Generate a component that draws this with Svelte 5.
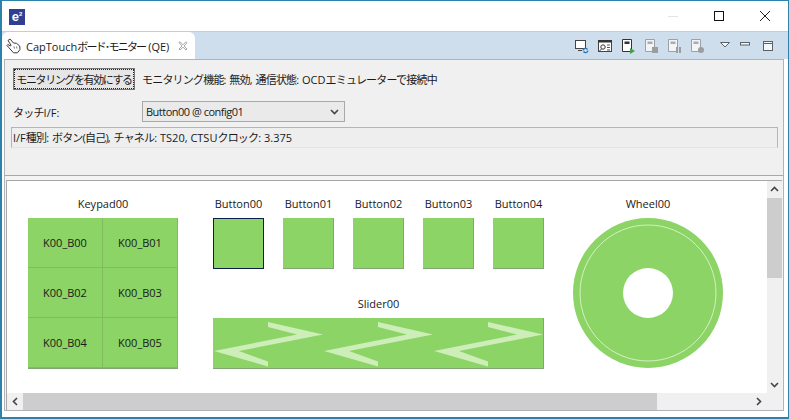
<script lang="ts">
	const keys = ['K00_B00', 'K00_B01', 'K00_B02', 'K00_B03', 'K00_B04', 'K00_B05'];
	const buttons = ['Button00', 'Button01', 'Button02', 'Button03', 'Button04'];
	// chevron offsets inside the slider
	const chevrons = [0, 110, 220];
</script>

<div class="window">
	<header class="titlebar">
		<div class="app-logo">e<sup>2</sup></div>
		<div class="win-controls">
			<svg width="12" height="12" viewBox="0 0 12 12"><path d="M1 6.5h10" stroke="#e4e4e4" fill="none" /></svg>
			<svg width="12" height="12" viewBox="0 0 12 12"><rect x="1.5" y="1.5" width="9" height="9" stroke="#111" fill="none" /></svg>
			<svg width="12" height="12" viewBox="0 0 12 12"><path d="M1 1l10 10M11 1L1 11" stroke="#222" fill="none" /></svg>
		</div>
	</header>

	<div class="tabstrip">
		<div class="tab">
			<svg class="hand" width="16" height="16" viewBox="0 0 16 16">
				<path d="M2 2.500l2-1.500 3.500 4 3 .3 3.200 2.700.3 3.500-2.500 3.300H7.500L3 9.800 1 7.500l.8-1 2.700 1.500 .5-.8z" fill="#fff" stroke="#3a3a3a" stroke-linejoin="round" />
				<path d="M8 8.500l.5 2M10.500 8.500l.5 2" stroke="#777" fill="none" />
			</svg>
			<span class="tab-title">CapTouch<span class="ja tab-ja">ボード･モニター</span> (QE)</span>
			<svg class="close" width="10" height="10" viewBox="0 0 10 10">
				<path d="M1 1.500L2 .8 5 3.800 8 .8l1 1L6 5l3 3-1 1L5 6.200 2 9 1 8l3-3z" fill="#fff" stroke="#8a8f95" stroke-width=".8" />
			</svg>
		</div>
		<div class="toolbar">
			<svg width="16" height="16" viewBox="0 0 16 16">
				<rect x="1.500" y="2.500" width="10" height="8" fill="#fff" stroke="#444" /><path d="M4 12.500h4" stroke="#444" />
				<path d="M9 12.500a2.500 2.500 0 0 1 4.500-1M14 12.500a2.500 2.500 0 0 1-4.500 1" stroke="#2c78b8" stroke-width="1.300" fill="none" />
			</svg>
			<svg width="16" height="16" viewBox="0 0 16 16">
				<rect x="1.500" y="2.500" width="13" height="11" fill="#fff" stroke="#444" /><rect x="1" y="2" width="14" height="2.500" fill="#333" />
				<circle cx="6" cy="9" r="2.200" fill="none" stroke="#333" /><path d="M4.500 11L2.500 13" stroke="#333" /><path d="M10 7h3M10 9.500h3M10 12h3" stroke="#555" />
			</svg>
			<svg width="16" height="16" viewBox="0 0 16 16">
				<path d="M2.500 1.500h9v12h-9z" fill="#fff" stroke="#333" /><rect x="4.500" y="3.500" width="5" height="2.500" fill="#333" /><path d="M10 10l5 3-5 3z" fill="#43a047" />
			</svg>
			<svg width="16" height="16" viewBox="0 0 16 16">
				<path d="M2.500 1.500h9v12h-9z" fill="#f2f4f6" stroke="#9aa0a6" /><rect x="4.500" y="3.500" width="5" height="2.500" fill="#a8adb2" /><rect x="9" y="9" width="6" height="6" fill="#9b9ea1" />
			</svg>
			<svg width="16" height="16" viewBox="0 0 16 16">
				<path d="M2.500 1.500h9v12h-9z" fill="#f2f4f6" stroke="#9aa0a6" /><rect x="4.500" y="3.500" width="5" height="2.500" fill="#a8adb2" /><path d="M10 9v6h2V9zM13 9v6h2V9z" fill="#9b9ea1" />
			</svg>
			<svg width="16" height="16" viewBox="0 0 16 16">
				<path d="M2.500 1.500h9v12h-9z" fill="#f2f4f6" stroke="#9aa0a6" /><rect x="4.500" y="3.500" width="5" height="2.500" fill="#a8adb2" /><circle cx="12" cy="12" r="3" fill="#9b9ea1" />
			</svg>
			<svg class="menu" width="16" height="16" viewBox="0 0 16 16"><path d="M2.500 4.500h9L7 9z" fill="#f4f7fa" stroke="#5b6168" /></svg>
			<svg class="mini" width="16" height="16" viewBox="0 0 16 16"><rect x="2.500" y="4.500" width="9" height="2.500" fill="#f4f7fa" stroke="#5b6168" /></svg>
			<svg class="maxi" width="16" height="16" viewBox="0 0 16 16"><rect x="3.500" y="3.500" width="9" height="9" fill="#f4f7fa" stroke="#5b6168" /><path d="M3.500 5.500h9" stroke="#5b6168" /></svg>
		</div>
	</div>

	<div class="body">
		<section class="controls">
			<div class="monitor-row">
				<button type="button" class="monitor-btn"><span class="ja btn-ja">モニタリングを有効にする</span></button>
				<span><span class="ja">モニタリング機能</span>: <span class="ja">無効</span>, <span class="ja">通信状態</span>: OCD<span class="ja">エミュレーターで接続中</span></span>
			</div>
			<div class="touch-row">
				<span class="touch-label"><span class="ja">タッチ</span>I/F:</span>
				<div class="select">
					<span class="select-value">Button00 @ config01</span>
					<svg width="9" height="6" viewBox="0 0 9 6"><path d="M1 1l3.500 3.500L8 1" fill="none" stroke="#444" stroke-width="1.600" /></svg>
				</div>
			</div>
			<div class="info">I/F<span class="ja">種別</span>: <span class="ja">ボタン(自己)</span>, <span class="ja">チャネル</span>: TS20, CTSU<span class="ja">クロック</span>: 3.375</div>
		</section>

		<section class="viewer">
			<div class="canvas-row">
				<div class="canvas">
					<div class="keypad-col">
						<div class="cap">Keypad00</div>
						<div class="keypad">
							{#each keys as key}
								<div class="key">{key}</div>
							{/each}
						</div>
					</div>
					<div class="middle-col">
						<div class="button-row">
							{#each buttons as name, i}
								<div class="btn-col">
									<div class="cap">{name}</div>
									<div class="pad" class:selected={i === 0}></div>
								</div>
							{/each}
						</div>
						<div class="cap slider-cap">Slider00</div>
						<svg class="slider" width="331" height="51" viewBox="0 0 331 51">
							<rect width="331" height="51" fill="#8bd465" />
							<path d="M0 50.500H330.500V0" fill="none" stroke="#7fa673" />
							{#each chevrons as x}
								<path
									transform="translate({x} 0)"
									d="M55 4L110 16.500 26 33 55 43.500V48.500L1 33 84 16.500 55 9z"
									fill="#cdeeb8"
								/>
							{/each}
						</svg>
					</div>
					<div class="wheel-col">
						<div class="cap">Wheel00</div>
						<svg class="wheel" width="150" height="150" viewBox="0 0 150 150">
							<circle cx="75" cy="75" r="75" fill="#8bd465" />
							<circle cx="75" cy="75" r="68" fill="none" stroke="#d4f2c0" />
							<circle cx="75" cy="75" r="25" fill="#fff" />
						</svg>
					</div>
				</div>
				<div class="vscroll">
					<svg class="arrow" width="15" height="17" viewBox="0 0 15 17"><path d="M4 10l3.500-3.500L11 10" fill="none" stroke="#444" stroke-width="1.600" /></svg>
					<div class="vthumb"></div>
					<div class="spacer"></div>
					<svg class="arrow" width="15" height="17" viewBox="0 0 15 17"><path d="M4 7l3.500 3.500L11 7" fill="none" stroke="#444" stroke-width="1.600" /></svg>
				</div>
			</div>
			<div class="hscroll">
				<svg class="arrow" width="16" height="17" viewBox="0 0 16 17"><path d="M10 5L6.500 8.500 10 12" fill="none" stroke="#444" stroke-width="1.600" /></svg>
				<div class="hthumb"></div>
				<div class="spacer"></div>
				<svg class="arrow" width="17" height="17" viewBox="0 0 17 17"><path d="M7 5l3.500 3.500L7 12" fill="none" stroke="#444" stroke-width="1.600" /></svg>
				<div class="corner"></div>
			</div>
		</section>
	</div>
</div>

<style>
	:global(body) {
		margin: 0;
		background: #fff;
	}

	.window {
		width: 789px;
		height: 419px;
		box-sizing: border-box;
		display: flex;
		flex-direction: column;
		overflow: hidden;
		border: 1px solid #2b82ab;
		border-left-width: 2px;
		border-bottom-width: 2px;
		background: #fff;
		font-family: "Open Sans", "Noto Sans CJK JP", sans-serif;
		font-size: 11px;
		color: #1a1a1a;
	}

	.ja {
		letter-spacing: -0.8px;
	}

	.tab-ja {
		letter-spacing: -1.8px;
	}

	.btn-ja {
		letter-spacing: -1.4px;
	}

	.titlebar {
		height: 30px;
		flex-shrink: 0;
		display: flex;
		align-items: center;
		justify-content: space-between;
		padding-left: 7px;
	}

	.app-logo {
		width: 16px;
		height: 16px;
		background: #2f3f91;
		color: #fff;
		font: bold 13px/15px "Liberation Sans", sans-serif;
		text-align: center;
		margin-top: 1px;
	}

	.app-logo sup {
		font-size: 6px;
		line-height: 0;
	}

	.win-controls {
		display: flex;
		gap: 34px;
		padding-right: 17px;
		margin-top: -1px;
	}

	.tabstrip {
		height: 28px;
		flex-shrink: 0;
		display: flex;
		justify-content: space-between;
		background: #cfdeec;
		border-top: 1px solid #c2cfdb;
		box-sizing: border-box;
	}

	.tab {
		width: 193px;
		display: flex;
		align-items: center;
		padding-left: 4px;
		box-sizing: border-box;
		background: #fff;
		border-radius: 6px 6px 0 0;
		white-space: nowrap;
	}

	.tab svg {
		flex-shrink: 0;
	}

	.tab-title {
		width: 152px;
		margin-left: 4px;
	}

	.toolbar {
		display: flex;
		align-items: center;
		padding-right: 12px;
	}

	.toolbar svg {
		margin-left: 7px;
	}

	.toolbar .menu {
		margin-left: 13px;
	}

	.toolbar .mini {
		margin-left: 4px;
	}

	.toolbar .maxi {
		margin-left: 6px;
	}

	.body {
		flex: 1;
		min-height: 0;
		display: flex;
		flex-direction: column;
		margin: 0 4px 6px 2px;
		border: 1px solid #b0b4b8;
		background: #f4f4f4;
	}

	.controls {
		height: 116px;
		flex-shrink: 0;
		box-sizing: border-box;
		padding: 8px 0 0 8px;
		background: #f0f0f0;
		border-bottom: 1px solid #a8a8a8;
	}

	.monitor-row {
		display: flex;
		align-items: center;
		gap: 7px;
	}

	.monitor-btn {
		width: 122px;
		height: 22px;
		padding: 0;
		background: #e6e6e6;
		border: 1px solid #777;
		outline: 1px dotted #222;
		outline-offset: -2px;
		font: inherit;
		color: inherit;
		white-space: nowrap;
	}

	.touch-row {
		display: flex;
		align-items: center;
		margin-top: 11px;
	}

	.touch-label {
		width: 129px;
		flex-shrink: 0;
	}

	.select {
		width: 203px;
		height: 21px;
		box-sizing: border-box;
		display: flex;
		align-items: center;
		justify-content: space-between;
		padding: 0 5px 0 3px;
		background: #eaeaea;
		border: 1px solid #a9a9a9;
	}

	.select-value {
		letter-spacing: -0.5px;
	}

	.info {
		height: 21px;
		margin: 5px 5px 0 -2px;
		box-sizing: border-box;
		padding-left: 1px;
		line-height: 19px;
		background: #eeeeee;
		border: 1px solid #b5b5b5;
		border-bottom-color: #e4e4e4;
	}

	.viewer {
		flex: 1;
		min-height: 0;
		margin: 4px 1px 0 1px;
		display: flex;
		flex-direction: column;
		background: #fff;
		border-top: 1px solid #a8a8a8;
		border-left: 1px solid #a8a8a8;
	}

	.canvas-row {
		flex: 1;
		min-height: 0;
		display: flex;
	}

	.canvas {
		flex: 1;
		display: flex;
		align-items: flex-start;
		padding: 14px 0 0 21px;
	}

	.cap {
		height: 23px;
		text-align: center;
		line-height: 18px;
		white-space: nowrap;
	}

	.keypad {
		display: grid;
		grid-template-columns: 75px 75px;
		grid-auto-rows: 50px;
		border-right: 1px solid #7fa673;
		border-bottom: 1px solid #7fa673;
		width: 150px;
		box-sizing: border-box;
	}

	.key {
		display: flex;
		align-items: center;
		justify-content: center;
		background: #8bd465;
		border-right: 1px solid #80bb62;
		border-bottom: 1px solid #80bb62;
	}

	.middle-col {
		width: 331px;
		margin-left: 35px;
	}

	.button-row {
		display: flex;
		gap: 19px;
	}

	.btn-col {
		width: 51px;
	}

	.pad {
		width: 51px;
		height: 51px;
		box-sizing: border-box;
		background: #8bd465;
		border-right: 1px solid #7fa673;
		border-bottom: 1px solid #7fa673;
	}

	.pad.selected {
		border: 1px solid #0c1f4a;
	}

	.slider-cap {
		margin-top: 26px;
	}

	.slider,
	.wheel {
		display: block;
	}

	.wheel-col {
		width: 150px;
		margin-left: 29px;
	}

	.vscroll {
		width: 15px;
		flex-shrink: 0;
		display: flex;
		flex-direction: column;
		background: #f0f0f0;
	}

	.vthumb {
		height: 80px;
		background: #cdcdcd;
	}

	.spacer {
		flex: 1;
	}

	.arrow {
		display: block;
		flex-shrink: 0;
	}

	.hscroll {
		height: 17px;
		flex-shrink: 0;
		display: flex;
		background: #f0f0f0;
	}

	.hthumb {
		width: 634px;
		background: #cdcdcd;
	}

	.corner {
		width: 15px;
		background: #f0f0f0;
	}
</style>
